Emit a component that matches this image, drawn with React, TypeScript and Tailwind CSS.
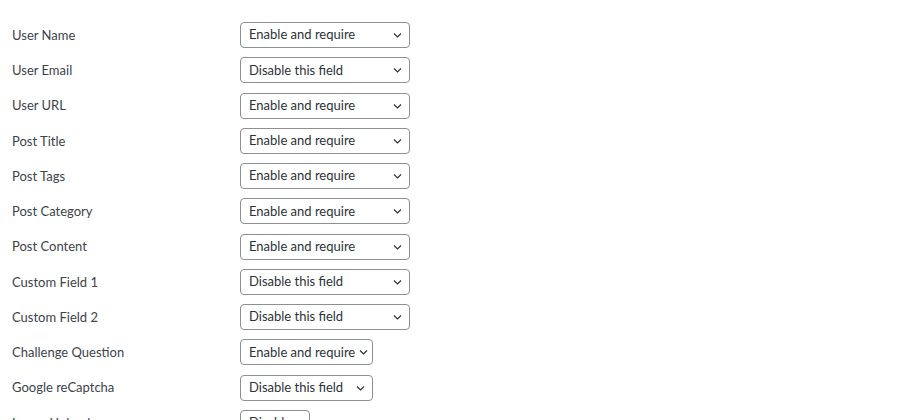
import React from "react";

type Row = { label: string; value: string; width: string };

const rows: Row[] = [
  { label: "User Name", value: "Enable and require", width: "w-[170px]" },
  { label: "User Email", value: "Disable this field", width: "w-[170px]" },
  { label: "User URL", value: "Enable and require", width: "w-[170px]" },
  { label: "Post Title", value: "Enable and require", width: "w-[170px]" },
  { label: "Post Tags", value: "Enable and require", width: "w-[170px]" },
  { label: "Post Category", value: "Enable and require", width: "w-[170px]" },
  { label: "Post Content", value: "Enable and require", width: "w-[170px]" },
  { label: "Custom Field 1", value: "Disable this field", width: "w-[170px]" },
  { label: "Custom Field 2", value: "Disable this field", width: "w-[170px]" },
  { label: "Challenge Question", value: "Enable and require", width: "w-[133px]" },
  { label: "Google reCaptcha", value: "Disable this field", width: "w-[133px]" },
  { label: "Image Upload", value: "Disable", width: "w-[70px]" },
];

const Chevron = () => (
  <svg width="9" height="6" viewBox="0 0 9 6" fill="none" className="shrink-0">
    <path d="M1 1.5l3.5 3.5 3.5-3.5" stroke="#2c3338" strokeWidth="1.2" />
  </svg>
);

const FakeSelect: React.FC<{ value: string; width: string }> = ({ value, width }) => (
  <div
    className={`${width} h-[26px] flex items-center justify-between gap-1 pl-2 pr-[7px] border border-[#8c8f94] rounded-[4px] bg-white text-[13px] text-[#2c3338] overflow-hidden`}
  >
    <span className="whitespace-nowrap">{value}</span>
    <Chevron />
  </div>
);

const App: React.FC = () => {
  return (
    <div
      className="w-[900px] h-[420px] overflow-hidden bg-white pt-[17.5px]"
      style={{ fontFamily: 'Lato, "Noto Sans", sans-serif' }}
    >
      {rows.map((row) => (
        <div key={row.label} className="flex items-center h-[35.25px]">
          <div className="w-[240px] pl-3 pt-px text-[13px] text-[#3c434a]">{row.label}</div>
          <FakeSelect value={row.value} width={row.width} />
        </div>
      ))}
    </div>
  );
};

export default App;
